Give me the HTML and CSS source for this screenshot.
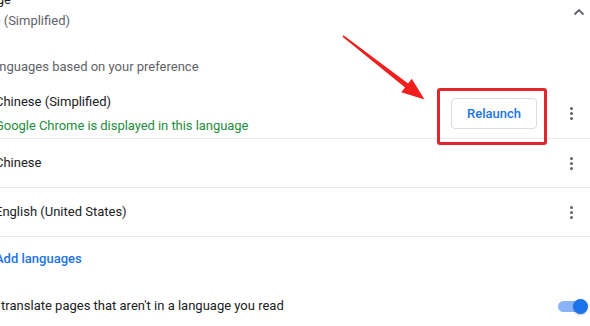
FILE: index.html
```html
<!DOCTYPE html>
<html lang="en">
<head>
<meta charset="utf-8">
<title>Languages</title>
<link rel="stylesheet" href="styles.css">
</head>
<body>
<div class="page">
  <div class="summary">
    <div class="summary-text">
      <div class="primary">Language</div>
      <div class="secondary">Chinese (Simplified)</div>
    </div>
    <svg class="chevron" width="12" height="8" viewBox="0 0 12 8"><path d="M1.5 6.5 L6 2 L10.5 6.5" fill="none" stroke="#5f6368" stroke-width="1.8"/></svg>
  </div>

  <div class="list-header">Order languages based on your preference</div>

  <div class="list">
    <div class="row row-first">
      <div class="row-text">
        <div class="primary">Chinese (Simplified)</div>
        <div class="note">Google Chrome is displayed in this language</div>
      </div>
      <button class="relaunch">Relaunch</button>
      <span class="kebab"><i></i><i></i><i></i></span>
    </div>
    <div class="row">
      <div class="row-text"><div class="primary">Chinese</div></div>
      <span class="kebab"><i></i><i></i><i></i></span>
    </div>
    <div class="row">
      <div class="row-text"><div class="primary">English (United States)</div></div>
      <span class="kebab"><i></i><i></i><i></i></span>
    </div>
  </div>

  <div class="add">Add languages</div>

  <div class="translate">
    <div class="primary">Offer to translate pages that aren't in a language you read</div>
    <span class="toggle"><span class="track"></span><span class="knob"></span></span>
  </div>
</div>

<div class="highlight"></div>
<svg class="arrow" width="590" height="326" viewBox="0 0 590 326">
  <polygon points="343.5,35.2 408.1,83.5 411.8,78.8 424.5,99.5 401.3,92.2 405.1,87.5 342.5,36.8" fill="#f21d1d"/>
</svg>
</body>
</html>
```

FILE: styles.css
```css
html, body {
  margin: 0;
  padding: 0;
  background: #ffffff;
  overflow: hidden;
}

body {
  width: 590px;
  height: 326px;
  font-family: Roboto, "Noto Sans", Arial, sans-serif;
  font-size: 13px;
  color: #202124;
  position: relative;
}

.page {
  margin-left: -46px;
  margin-top: -10px;
  display: flex;
  flex-direction: column;
}

.primary {
  color: #202124;
  line-height: 20px;
  white-space: nowrap;
}

.secondary {
  color: #5f6368;
  line-height: 20px;
  margin-top: 1px;
  white-space: nowrap;
}

.summary {
  display: flex;
  align-items: flex-start;
  justify-content: space-between;
  padding-right: 5px;
}

.chevron {
  margin-top: 18px;
}

.list-header {
  color: #5f6368;
  line-height: 20px;
  margin-top: 26px;
  white-space: nowrap;
}

.list {
  margin-top: 12px;
  display: flex;
  flex-direction: column;
}

.row {
  display: flex;
  align-items: center;
  min-height: 48px;
  padding-left: 41px;
  padding-right: 9px;
  border-bottom: 1px solid #e8eaed;
}

.row-first {
  min-height: 49px;
}

.row-text {
  flex: 1;
  display: flex;
  flex-direction: column;
  gap: 4px;
}

.note {
  color: #1e8e3e;
  line-height: 20px;
  white-space: nowrap;
  letter-spacing: -0.05px;
}

.relaunch {
  width: 86px;
  height: 31px;
  border: 1px solid #dadce0;
  border-radius: 4px;
  background: #ffffff;
  color: #1a73e8;
  font-family: Roboto, "Noto Sans", Arial, sans-serif;
  font-size: 13px;
  font-weight: 500;
  padding: 0;
  margin-right: 24px;
}

.kebab {
  width: 20px;
  display: flex;
  flex-direction: column;
  align-items: center;
  gap: 2px;
}

.kebab i {
  display: block;
  width: 3px;
  height: 3px;
  border-radius: 50%;
  background: #5f6368;
}

.add {
  margin-top: 12px;
  padding-left: 41px;
  line-height: 20px;
  color: #1a73e8;
  font-weight: 500;
}

.translate {
  margin-top: 27px;
  display: flex;
  align-items: center;
  justify-content: space-between;
  padding-right: 2px;
}

.toggle {
  display: flex;
  align-items: center;
}

.track {
  width: 25px;
  height: 11px;
  border-radius: 6px;
  background: #8ab4f8;
}

.knob {
  width: 15px;
  height: 15px;
  border-radius: 50%;
  background: #1a73e8;
  margin-left: -10px;
  box-shadow: 0 1px 2px rgba(0,0,0,0.25);
}

.highlight {
  position: absolute;
  left: 437px;
  top: 88px;
  width: 104px;
  height: 51px;
  border: 3px solid #e2262c;
  border-radius: 3px;
}

.arrow {
  position: absolute;
  left: 0;
  top: 0;
  pointer-events: none;
}
```
